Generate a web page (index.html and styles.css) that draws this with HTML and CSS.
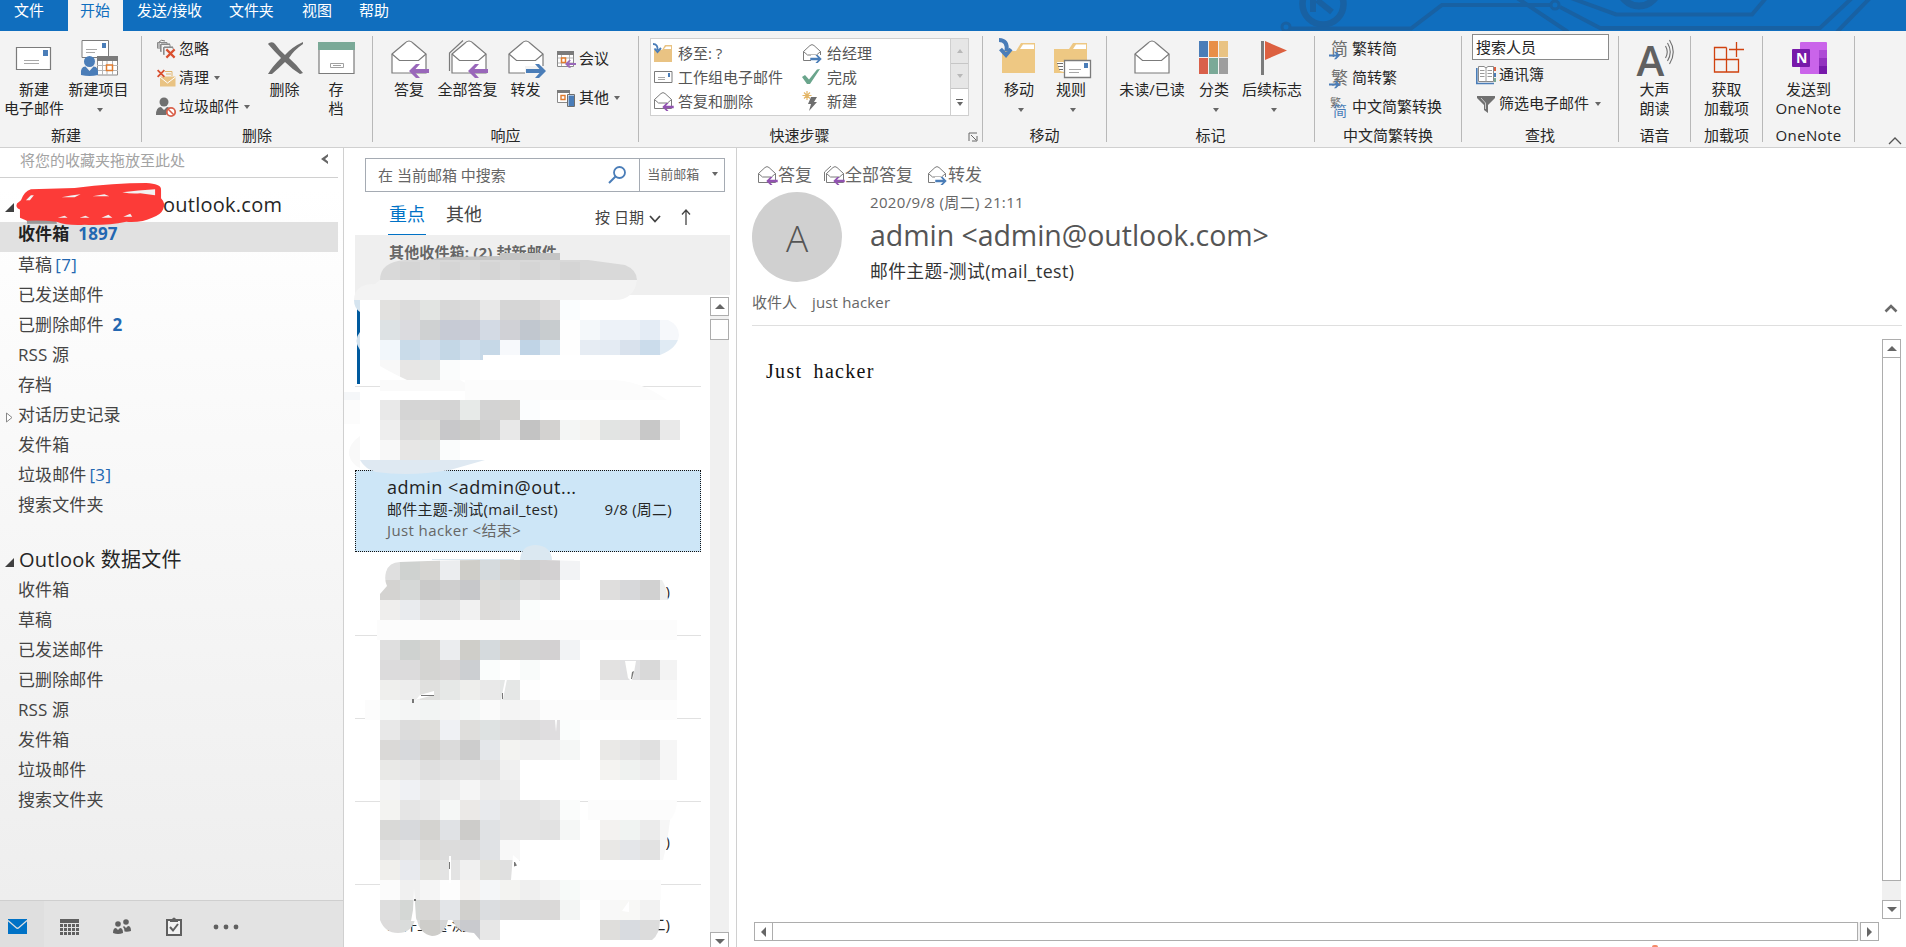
FILE: index.html
```html
<!DOCTYPE html>
<html lang="zh-CN">
<head>
<meta charset="utf-8">
<title>Outlook</title>
<link rel="stylesheet" href="styles.css">
</head>
<body>
<svg class="defs" width="0" height="0" aria-hidden="true">
  <symbol id="env" viewBox="0 0 44 44"><path d="M5 18 17.500 7.500Q22 2.500 26.500 7.500L39 18V37H5Z" fill="#fff" stroke="#7b7b7b" stroke-width="1.200"/><path d="M5 18 12.500 24.500H31.500L39 18" fill="none" stroke="#7b7b7b" stroke-width="1.200"/></symbol>
  <symbol id="arrL" viewBox="0 0 20 14"><path d="M0 7 7 0H11L6.500 5H20V9H6.500L11 14H7Z"/></symbol>
  <symbol id="arrR" viewBox="0 0 20 14"><path d="M20 7 13 0H9L13.500 5H0V9H13.500L9 14H13Z"/></symbol>
  <symbol id="senv" viewBox="0 0 20 20"><path d="M1.500 8.500 8 2.500Q10 .7 12 2.500L18.500 8.500V17.500H1.500Z" fill="#fff" stroke="#7b7b7b"/><path d="M1.500 8.500 5.500 12H14.500L18.500 8.500" fill="none" stroke="#7b7b7b"/></symbol>
  <symbol id="redx" viewBox="0 0 12 12"><path d="M1.500 1.500 10.500 10.500M10.500 1.500 1.500 10.500" stroke="#d9502f" stroke-width="2.400"/></symbol>
</svg>

<header class="tabs">
  <svg class="circuit" viewBox="0 0 640 31" width="640" height="31" fill="none" stroke="#1861a3" stroke-width="4">
    <circle cx="57" cy="4" r="20.500" stroke-width="6.500"/><path d="M47-4V12M51 0 66 12" stroke-width="6"/>
    <circle cx="20" cy="27" r="4" stroke-width="3"/><path d="M24 28.500H145L176 5H284M251-2 302 32" />
    <circle cx="289" cy="5" r="4" stroke-width="3"/><path d="M294 7 334 28H554L586-2M305-2 350 14.500H486L500-2M571 32 604-2"/>
    <circle cx="373" cy="-14" r="20" stroke-width="7"/>
  </svg>
  <span class="tab t-file">文件</span><span class="tab on">开始</span><span class="tab t-send">发送/接收</span><span class="tab t-fold">文件夹</span><span class="tab t-view">视图</span><span class="tab t-help">帮助</span>
</header>

<section class="ribbon">
  <div class="group g-new">
    <div class="body">
      <div class="big w68"><svg class="ico" viewBox="0 0 44 44"><path d="M4.500 11.500H38.500V33.500H4.500Z" fill="#fff" stroke="#7b7b7b" stroke-width="1.200"/><path d="M31 14h5v6h-5Z" fill="#4a7db8"/><path d="M12 24.500H27M12 27.500H27" stroke="#a8a8a8"/></svg><b>新建</b><b>电子邮件</b></div>
      <div class="big w61"><svg class="ico" viewBox="0 0 44 44"><path d="M5 4.500H31.500V21.500H5Z" fill="#fff" stroke="#7b7b7b"/><path d="M25 7h4v5h-4Z" fill="#4a7db8"/><path d="M9 13.500H20M9 16.500H18" stroke="#a8a8a8"/><path d="M20.500 20.500H40.500V39H20.500Z" fill="#fff" stroke="#8a8a8a"/><path d="M20 20H41V25H20Z" fill="#7b7b7b"/><path d="M25.500 25V39M30 25V39M35.500 25V39M20 29.500H41M20 34.500H41" stroke="#b5b5b5"/><path d="M29.500 29h6v5.500h-6Z" fill="#fff" stroke="#e07b2e" stroke-width="1.500"/><circle cx="12.500" cy="25.500" r="5.500" fill="#4a7db8"/><path d="M4 39Q3 30.500 8.500 30.500L12.500 35 16.500 30.500Q22 30.500 21 39Q12.500 41 4 39Z" fill="#4a7db8"/></svg><b>新建项目</b><i class="caret"></i></div>
    </div>
    <div class="label shift-new">新建</div>
  </div>

  <div class="group g-del">
    <div class="body">
      <div class="smalls c-del">
        <div class="small"><svg viewBox="0 0 20 20"><path d="M3 10V3Q5 0 9 2M5 13V5H14M8 16V8H17" fill="none" stroke="#7b7b7b"/><path d="M1.500 9.500V3.500H11V6M4.500 12.500V5.500H14V8M7.500 15.500V8.500H17V10" fill="none" stroke="#8a8a8a"/><use href="#redx" x="9" y="9" width="11" height="11"/></svg><span>忽略</span></div>
        <div class="small"><svg viewBox="0 0 20 20"><path d="M4 8.500H19.500V18.500H4Z" fill="#e9c383"/><path d="M4 9 11.500 15 19.500 9" fill="none" stroke="#fff"/><path d="M9 3.500H16V8M10 6H15" fill="none" stroke="#e0b56c"/><use href="#redx" x="0" y="1" width="10" height="9"/></svg><span>清理</span><i class="caret"></i></div>
        <div class="small"><svg viewBox="0 0 20 20"><circle cx="8" cy="5" r="4.500" fill="#707070"/><path d="M0 18Q0 10 5 10L8 13 11 10Q13 10 14 12L10 18Z" fill="#707070"/><circle cx="15" cy="15" r="4.200" fill="#fff" stroke="#d9604a" stroke-width="1.800"/><path d="M12 12 18 18" stroke="#d9604a" stroke-width="1.600"/></svg><span>垃圾邮件</span><i class="caret"></i></div>
      </div>
      <div class="big w59"><svg class="ico" viewBox="0 0 44 44"><path d="M6 7Q10 5 12 8Q17 15 22 19Q29 11 40 6L40 8Q31 14 26 22Q34 29 40 37L37 38Q29 33 22 26Q16 32 9 38H5Q9 31 18 22Q11 15 5 8Z" fill="#6e6e6e"/></svg><b>删除</b></div>
      <div class="big w44"><svg class="ico" viewBox="0 0 44 44"><path d="M5 10.500H40V37.500H5Z" fill="#fff" stroke="#7b7b7b" stroke-width="1.200"/><path d="M4 6H41V14H4Z" fill="#7aa997"/><path d="M16.500 27.500H29.500V31.500H16.500ZM19 29.500H27" fill="none" stroke="#a0a0a0"/></svg><b>存</b><b>档</b></div>
    </div>
    <div class="label">删除</div>
  </div>

  <div class="group g-resp">
    <div class="body">
      <div class="big w58"><svg class="ico" viewBox="0 0 44 44"><use href="#env" width="44" height="44"/><use href="#arrL" x="22" y="28" width="20" height="14" fill="#9967ba"/></svg><b>答复</b></div>
      <div class="big w59"><svg class="ico" viewBox="0 0 44 44"><path d="M3.500 35V17L17 4.500" fill="none" stroke="#7b7b7b" stroke-width="1.200"/><use href="#env" x="1" width="44" height="44"/><use href="#arrL" x="22" y="28" width="20" height="14" fill="#9967ba"/></svg><b>全部答复</b></div>
      <div class="big w57"><svg class="ico" viewBox="0 0 44 44"><use href="#env" width="44" height="44"/><path d="M21 30H40V40H21Z" fill="#f3f3f3"/><use href="#arrR" x="22" y="28" width="20" height="14" fill="#4a7db8"/></svg><b>转发</b></div>
      <div class="smalls c-meet">
        <div class="small"><svg viewBox="0 0 20 20"><path d="M1.500 2.500H17.500V17.500H1.500Z" fill="#fff" stroke="#8a8a8a"/><path d="M1 2H18V6H1Z" fill="#7b7b7b"/><path d="M5.500 6V17M13.500 6V17M2 9H17M2 14H17" stroke="#b5b5b5"/><path d="M5.500 9h4v4.500h-4Z" fill="#fff" stroke="#e07b2e" stroke-width="1.500"/><use href="#arrL" x="9" y="11" width="11" height="8" fill="#9967ba"/></svg><span>会议</span></div>
        <div class="small"><svg viewBox="0 0 20 20"><path d="M1.500 2.500H13.500V14.500H1.500Z" fill="#fff" stroke="#8a8a8a"/><path d="M1 2H14V5H1Z" fill="#7b7b7b"/><path d="M5 7.500h4v4h-4Z" fill="#fff" stroke="#e07b2e" stroke-width="1.400"/><path d="M12 7H18.500V19H12Z" fill="#4a7db8" stroke="#fff"/><path d="M11.500 6.500H18.500V18.500H11.500Z" fill="none" stroke="#6e6e6e"/></svg><span>其他</span><i class="caret"></i></div>
      </div>
    </div>
    <div class="label">响应</div>
  </div>

  <div class="group g-quick">
    <div class="body">
      <div class="gallery">
        <div class="q"><svg viewBox="0 0 20 20"><path d="M1 7H9L12 2H19V19H1Z" fill="#e9c383"/><path d="M11 6 13 3.500H18V6Z" fill="#fff"/><path d="M0 1Q5 1 4.500 7M1.500 5.500 4.500 9 8 5" fill="none" stroke="#4a7db8" stroke-width="1.900"/></svg><span>移至: ?</span></div>
        <div class="q"><svg viewBox="0 0 20 20"><use href="#senv" width="20" height="20"/><path d="M9 12H19V19H9Z" fill="#fff"/><use href="#arrR" x="8" y="12" width="12" height="8" fill="#4a7db8"/></svg><span>给经理</span></div>
        <div class="q"><svg viewBox="0 0 20 20"><path d="M1.500 4.500H19V15.500H1.500Z" fill="#fff" stroke="#7b7b7b"/><path d="M15 6h2v4h-2Z" fill="#4a7db8"/><path d="M5 10.500H12M5 12.500H12" stroke="#a8a8a8"/></svg><span>工作组电子邮件</span></div>
        <div class="q"><svg viewBox="0 0 20 20"><path d="M0 10 3 8 7 12.500 15 2.500 18 2 8 17H5Z" fill="#6aa58c"/></svg><span>完成</span></div>
        <div class="q"><svg viewBox="0 0 20 20"><use href="#senv" width="20" height="20"/><use href="#arrL" x="9" y="12" width="12" height="8" fill="#9152b0"/></svg><span>答复和删除</span></div>
        <div class="q"><svg viewBox="0 0 20 20"><path d="M5 0V9M.5 4.500H9.500M2 1.500 8 7.500M8 1.500 2 7.500" stroke="#e3b566" stroke-width="1.200"/><path d="M9 6H15L12 11H15L7 20 9 13H6Z" fill="#6e6e6e"/></svg><span>新建</span></div>
      </div>
      <div class="spin"><i class="up off"></i><i class="dn off"></i><i class="more"></i></div>
    </div>
    <div class="label shift-quick"><span>快速步骤</span><svg class="launch" viewBox="0 0 10 10"><path d="M1 9V1H9M3 3 8 8M9 4V9H4" fill="none" stroke="#666"/></svg></div>
  </div>

  <div class="group g-move">
    <div class="body">
      <div class="big w52"><svg class="ico" viewBox="0 0 44 44"><path d="M5 15H19L24 7H38V37H5Z" fill="#eec883"/><path d="M23 13 26 8.500H37V13Z" fill="#fff"/><path d="M2 4Q11 4 9.500 15M3.500 13 9 19 14 13" fill="none" stroke="#4a7db8" stroke-width="4"/></svg><b>移动</b><i class="caret"></i></div>
      <div class="big w52"><svg class="ico" viewBox="0 0 44 44"><path d="M5 13H20L24 7H38V37H5Z" fill="#eec883"/><path d="M24 13 27 8.500H37V13Z" fill="#fff"/><path d="M8 26H15V36L11 35Z" fill="#fff"/><path d="M8 27.500H14M9 30.500H14M10 33.500H14" stroke="#6e6e6e"/><path d="M15.500 24.500H41.500V41.500H15.500Z" fill="#fff" stroke="#7b7b7b" stroke-width="1.300"/><path d="M35 27h4v5h-4Z" fill="#4a7db8"/><path d="M20 33.500H32M20 36.500H30" stroke="#a8a8a8"/></svg><b>规则</b><i class="caret"></i></div>
    </div>
    <div class="label">移动</div>
  </div>

  <div class="group g-tag">
    <div class="body">
      <div class="big w72"><svg class="ico" viewBox="0 0 44 44"><use href="#env" width="44" height="44"/></svg><b>未读/已读</b></div>
      <div class="big w52"><svg class="ico" viewBox="0 0 44 44"><path d="M7 5h9v16H7Z" fill="#4a7db8"/><path d="M17 5h9v16H17Z" fill="#e88f48"/><path d="M27 5h9v16H27Z" fill="#e9c383"/><path d="M7 22h9v16H7Z" fill="#d9604a"/><path d="M17 22h9v16H17Z" fill="#7aa997"/><path d="M27 22h9v16H27Z" fill="#9e9e9e"/></svg><b>分类</b><i class="caret"></i></div>
      <div class="big w64"><svg class="ico" viewBox="0 0 44 44"><path d="M11 5h3v34h-3Z" fill="#7b7b7b"/><path d="M15 5 37 14.500 15 24Z" fill="#dc6040"/></svg><b>后续标志</b><i class="caret"></i></div>
    </div>
    <div class="label">标记</div>
  </div>

  <div class="group g-conv">
    <div class="body">
      <div class="smalls c-conv">
        <div class="small"><svg viewBox="0 0 20 20"><text x="2" y="16" class="han gray">简</text><use href="#arrR" x="0" y="12" width="11" height="9" fill="#4a7db8"/></svg><span>繁转简</span></div>
        <div class="small"><svg viewBox="0 0 20 20"><text x="2" y="16" class="han gray">繁</text><use href="#arrR" x="0" y="12" width="11" height="9" fill="#4a7db8"/></svg><span>简转繁</span></div>
        <div class="small"><svg viewBox="0 0 20 20"><text x="1" y="10" class="han-s gray">繁</text><text x="4" y="19" class="han-m blue">简</text></svg><span>中文简繁转换</span></div>
      </div>
    </div>
    <div class="label">中文简繁转换</div>
  </div>

  <div class="group g-find">
    <div class="body col">
      <div class="people">搜索人员</div>
      <div class="small book"><svg viewBox="0 0 20 20"><path d="M.8 3V18.500H18" fill="none" stroke="#4a7db8" stroke-width="1.600"/><path d="M2.500 1.500H8L10 3 12 1.500H17.500V16.500H2.500Z" fill="#fff" stroke="#8a8a8a"/><path d="M10 3V16.500M4 5.500H8.500M4 8.500H8.500M4 11.500H8.500M11.500 5.500H16M11.500 8.500H16M11.500 11.500H16" stroke="#9a9a9a"/><path d="M18 2h2v4h-2Z" fill="#dc6040"/><path d="M18 8h2v4h-2Z" fill="#4a7db8"/><path d="M18 13h2v4h-2Z" fill="#7aa997"/></svg><span>通讯簿</span></div>
      <div class="small filt"><svg viewBox="0 0 20 20"><path d="M1 2H19V4L12 11V19L8 16V11L1 4Z" fill="#707070"/><path d="M5 4 9.500 9V15" fill="none" stroke="#c9c9c9"/></svg><span>筛选电子邮件</span><i class="caret"></i></div>
    </div>
    <div class="label">查找</div>
  </div>

  <div class="group g-72a">
    <div class="body"><div class="big w71"><svg class="ico" viewBox="0 0 44 44"><text x="3.500" y="39.500" class="aloud">A</text><path d="M32.500 10Q36 16 32.500 22M34.500 7Q40 16 34.500 25M36.500 4Q44 16 36.500 28" fill="none" stroke="#6e6e6e" stroke-width="1.100"/></svg><b>大声</b><b>朗读</b></div></div>
    <div class="label">语音</div>
  </div>

  <div class="group g-72b">
    <div class="body"><div class="big w71"><svg class="ico" viewBox="0 0 44 44"><path d="M21.500 11.500H9.500V36H33.500V23.500H9.500M21.500 11.500V36M31.500 6V21M24 13.500H39" fill="none" stroke="#d0420f" stroke-width="1.300"/></svg><b>获取</b><b>加载项</b></div></div>
    <div class="label">加载项</div>
  </div>

  <div class="group g-one">
    <div class="body"><div class="big w91"><svg class="ico" viewBox="0 0 44 44"><rect x="13" y="6" width="27" height="32" rx="1" fill="#ca64ea"/><path d="M32 14h8v8h-8Z" fill="#ae4bd5"/><path d="M32 22h8v8h-8Z" fill="#9332bf"/><path d="M32 30h8v8h-8Z" fill="#7719aa"/><rect x="5" y="13" width="18" height="18" rx="1" fill="#7719aa"/><text x="9" y="27" class="note">N</text></svg><b>发送到</b><b class="lat">OneNote</b></div></div>
    <div class="label lat">OneNote</div>
  </div>
  <svg class="collapse" viewBox="0 0 14 8"><path d="M1 7 7 1 13 7" fill="none" stroke="#555" stroke-width="1.300"/></svg>
</section>

<main class="panes">
  <aside class="nav">
    <div class="fav"><span>将您的收藏夹拖放至此处</span><svg viewBox="0 0 8 10"><path d="M7 0V2.500L4 5 7 7.500V10L0 5Z" fill="#666"/></svg></div>
    <div class="acct"><svg class="tri" viewBox="0 0 9 9"><path d="M9 0V9H0Z" fill="#404040"/></svg><span class="addr">outlook.com</span>
      <svg class="scrib" viewBox="0 0 154 48" preserveAspectRatio="none"><path d="M12 34H42V40H12Z" fill="#999"/><path d="M6 17Q9 8 16 6L60 5Q100 0 132 0Q147 1 147 6V15Q152 20 149 26Q147 31 138 34Q128 39 112 38Q92 42 70 41Q52 42 42 38Q26 36 12 37L5 34V26Q0 24 2 20Z" fill="#fc3b38"/><path d="M11 17 16 12H19L15 17ZM47 14Q56 12 66 11L60 14ZM78 13 90 11 95 13ZM108 9Q124 7 141 6V12L126 10Q118 11 108 9ZM43 34 50 32 53 34ZM65 34 71 32 75 34ZM87 34 94 31 98 34ZM109 33 116 30 118 33Z" fill="#f2f2f2"/></svg>
    </div>
    <div class="f sel"><strong>收件箱</strong><em>1897</em></div>
    <div class="f"><span>草稿</span><u>[7]</u></div>
    <div class="f"><span>已发送邮件</span></div>
    <div class="f"><span>已删除邮件</span><em>2</em></div>
    <div class="f"><span>RSS 源</span></div>
    <div class="f"><span>存档</span></div>
    <div class="f"><svg class="exp" viewBox="0 0 7 11"><path d="M.5 1V10L6 5.500Z" fill="#fff" stroke="#888"/></svg><span>对话历史记录</span></div>
    <div class="f"><span>发件箱</span></div>
    <div class="f"><span>垃圾邮件</span><u>[3]</u></div>
    <div class="f"><span>搜索文件夹</span></div>
    <div class="acct second"><svg class="tri" viewBox="0 0 9 9"><path d="M9 0V9H0Z" fill="#404040"/></svg><span>Outlook 数据文件</span></div>
    <div class="f"><span>收件箱</span></div>
    <div class="f"><span>草稿</span></div>
    <div class="f"><span>已发送邮件</span></div>
    <div class="f"><span>已删除邮件</span></div>
    <div class="f"><span>RSS 源</span></div>
    <div class="f"><span>发件箱</span></div>
    <div class="f"><span>垃圾邮件</span></div>
    <div class="f"><span>搜索文件夹</span></div>
    <div class="modules">
      <span class="mod active"><svg width="19" height="15" viewBox="0 0 19 15"><path d="M0 0H19V15H0Z" fill="#0072c6"/><path d="M0 1.500 8 8.500Q9.500 10 11 8.500L19 1.500" fill="none" stroke="#e0e0e0" stroke-width="1.200"/></svg></span>
      <svg class="m2" width="19" height="16" viewBox="0 0 19 16"><path d="M0 0h19v4H0Z" fill="#606060"/><path d="M0 6.500H19M0 10.500H19M0 14.500H19" stroke="#606060" stroke-width="3" stroke-dasharray="3 1"/></svg>
      <svg class="m3" width="18" height="16" viewBox="0 0 18 16" fill="#606060"><circle cx="5" cy="5" r="2.800"/><circle cx="13" cy="3" r="2.800"/><path d="M0 14Q0 9 3 9L5 11 7 9Q10 9 10 14Q5 16 0 14ZM10 8 11 7 13 9 15 7Q18 7 18 12Q15 13 11.500 12.500Q11.500 9 10 8Z"/></svg>
      <svg class="m4" width="16" height="19" viewBox="0 0 16 19"><path d="M1 3H15V18H1Z" fill="#f2f2f2" stroke="#606060" stroke-width="2"/><path d="M4 2H6Q8-1 10 2H12V5H4Z" fill="#606060"/><path d="M4 10 7 13.500 12 7" fill="none" stroke="#606060" stroke-width="2"/></svg>
      <svg class="m5" width="26" height="6" viewBox="0 0 26 6" fill="#606060"><circle cx="3" cy="3" r="2.400"/><circle cx="13" cy="3" r="2.400"/><circle cx="23" cy="3" r="2.400"/></svg>
    </div>
  </aside>

  <section class="list">
    <div class="search"><span class="ph">在 当前邮箱 中搜索</span><svg class="loupe" viewBox="0 0 18 18"><circle cx="11.500" cy="6.500" r="5.500" fill="none" stroke="#4a7db8" stroke-width="1.800"/><path d="M7.500 10.500 1 17" stroke="#4a7db8" stroke-width="2"/></svg><span class="scope">当前邮箱<i class="caret"></i></span></div>
    <div class="filter"><span class="focus">重点</span><span class="other">其他</span><span class="sort">按 日期</span><svg class="chev" viewBox="0 0 12 8"><path d="M1 1 6 6.500 11 1" fill="none" stroke="#444" stroke-width="1.800"/></svg><svg class="uparr" viewBox="0 0 10 16"><path d="M5 16V1M1 5.500 5 1 9 5.500" fill="none" stroke="#444" stroke-width="1.300"/></svg></div>
    <div class="newmail">其他收件箱: (2) 封新邮件</div>
    <div class="scrollarea">
      <div class="mails">
        <div class="mail m-a"><i class="unread"></i></div>
        <div class="mail m-b"></div>
        <div class="mail chosen">
          <div class="from">admin &lt;admin@out...</div>
          <div class="subj"><span>邮件主题-测试(mail_test)</span><span class="when">9/8 (周二)</span></div>
          <div class="prev">Just hacker &lt;结束&gt;</div>
        </div>
        <div class="mail m-d"><div class="under"><span class="when">二)</span></div></div>
        <div class="mail"></div>
        <div class="mail"></div>
        <div class="mail"><div class="under"><span class="when">二)</span></div></div>
        <div class="mail last"><div class="under"><span>邮件主题-测试</span><span class="when">二)</span></div></div>
      </div>
      <div class="vbar"><i class="btn upb"></i><i class="thumb"></i><i class="track"></i><i class="btn dnb"></i></div>
    </div>
    <svg class="mosaic" id="mosaic" viewBox="344 148 392 799" width="392" height="799"></svg>
  </section>

  <section class="reader">
    <div class="acts">
      <span class="act a1"><svg viewBox="0 0 20 20"><use href="#senv" width="20" height="20"/><use href="#arrL" x="9" y="12" width="12" height="8" fill="#9152b0"/></svg>答复</span>
      <span class="act a2"><svg viewBox="0 0 20 20"><path d="M.5 16V7L7 1" fill="none" stroke="#7b7b7b"/><use href="#senv" x="1" width="20" height="20"/><use href="#arrL" x="9" y="12" width="12" height="8" fill="#9152b0"/></svg>全部答复</span>
      <span class="act"><svg viewBox="0 0 20 20"><use href="#senv" width="20" height="20"/><path d="M8 12H20V20H8Z" fill="#fff"/><use href="#arrR" x="8" y="12" width="12" height="8" fill="#4a7db8"/></svg>转发</span>
    </div>
    <div class="head">
      <div class="avatar">A</div>
      <div class="meta">
        <div class="date">2020/9/8 (周二) 21:11</div>
        <div class="sender">admin &lt;admin@outlook.com&gt;</div>
        <div class="title">邮件主题-测试(mail_test)</div>
      </div>
    </div>
    <div class="to"><span>收件人</span><span class="who">just hacker</span><svg viewBox="0 0 14 9"><path d="M1.500 7.500 7 2 12.500 7.500" fill="none" stroke="#6a6a6a" stroke-width="2.600"/></svg></div>
    <div class="content">
      <div class="text">Just hacker</div>
      <div class="vbar vr"><i class="btn upb"></i><i class="thumb"></i><i class="track"></i><i class="btn dnb"></i></div>
    </div>
    <div class="hbar"><i class="btn lfb"></i><i class="thumb"></i><i class="track"></i><i class="btn rtb"></i></div>
    <i class="dot"></i>
  </section>
</main>
<script src="script.js"></script>
</body>
</html>
```

FILE: styles.css
```css
* { box-sizing: border-box; }
html, body { margin: 0; height: 947px; overflow: hidden; background: #fff; }
body { font-family: "Open Sans", "Noto Sans CJK SC", sans-serif; font-size: 15px; color: #262626; display: flex; flex-direction: column; }
i, em { font-style: normal; }
b { font-weight: 400; }
u { text-decoration: none; }
svg { display: block; flex: none; overflow: visible; }
.defs { position: absolute; }

/* tab strip */
.tabs { height: 31px; flex: none; background: #106ebe; color: #fff; display: flex; position: relative; overflow: hidden; }
.tab { height: 31px; line-height: 20px; white-space: nowrap; letter-spacing: -.1px; }
.circuit { position: absolute; left: 1266px; top: 0; }
.t-file { width: 68px; padding-left: 14px; }
.tab.on { width: 55px; padding-left: 12px; background: #f3f3f3; color: #106ebe; }
.t-send { width: 106px; padding-left: 14px; }
.t-fold { width: 73px; }
.t-view { width: 57px; }

/* ribbon */
.ribbon { height: 117px; flex: none; background: #f3f3f3; border-bottom: 1px solid #d0d0d0; display: flex; padding-top: 5px; }
.group { height: 106px; border-right: 1px solid #b8b8b8; display: flex; flex-direction: column; flex: none; }
.body { height: 92px; display: flex; }
.label { height: 14px; line-height: 14px; text-align: center; white-space: nowrap; position: relative; }
.g-new { width: 142px; } .g-del { width: 231px; } .g-resp { width: 266px; } .g-quick { width: 344px; }
.g-move { width: 124px; } .g-tag { width: 208px; } .g-conv { width: 147px; } .g-find { width: 157px; }
.g-72a, .g-72b { width: 72px; } .g-one { width: 92px; }
.shift-new { padding-right: 9px; }
.shift-quick { padding-right: 22px; }
.launch { position: absolute; right: 4px; top: 4px; width: 10px; height: 10px; }
.g-resp .body { padding-left: 7px; }
.g-move .body { padding-left: 10px; }
.g-tag .body { padding-left: 9px; }
.g-quick .body { padding: 2px 0 0 11px; }
.big { display: flex; flex-direction: column; align-items: center; flex: none; }
.big .ico { width: 44px; height: 44px; }
.big b { line-height: 18px; height: 19px; white-space: nowrap; }
.big .caret { margin: 9px 0 0 3px; }
.caret { display: block; width: 0; height: 0; border: 3px solid transparent; border-top: 4px solid #666; border-bottom: 0; flex: none; }
.w44 { width: 44px; } .w52 { width: 52px; } .w57 { width: 57px; } .w58 { width: 58px; } .w59 { width: 59px; } .w61 { width: 61px; }
.w64 { width: 64px; } .w68 { width: 68px; } .w71 { width: 71px; } .w72 { width: 72px; } .w91 { width: 91px; }
.lat { letter-spacing: .35px; }
.smalls { display: flex; flex-direction: column; flex: none; margin-top: -2px; }
.small { display: flex; align-items: center; height: 29px; line-height: 20px; white-space: nowrap; }
.small span { padding-bottom: 2px; }
.small svg { width: 20px; height: 20px; margin-right: 4px; }
.small .caret { margin-left: 5px; }
.c-del { width: 113px; padding-left: 14px; }
.c-del .small svg { margin-right: 3px; }
.c-meet { padding: 10px 0 0 2px; gap: 10px; }
.c-meet .small svg { margin-right: 3px; }
.c-conv { padding-left: 14px; }
.c-conv .small svg { margin-right: 3px; }
.han { font-size: 17px; } .han-m { font-size: 14px; } .han-s { font-size: 11px; }
.gray { fill: #6e6e6e; } .blue { fill: #4a7db8; }
.gallery { width: 301px; height: 78px; border: 1px solid #cfcfcf; background: #fff; display: grid; grid-template-columns: 149px 149px; grid-auto-rows: 24px; padding: 2px; color: #555; }
.q { display: flex; align-items: center; white-space: nowrap; }
.q span { padding-bottom: 2px; }
.q svg { width: 20px; height: 20px; margin-right: 5px; }
.spin { width: 18px; display: flex; flex-direction: column; height: 78px; border: 1px solid #cfcfcf; border-left: 0; }
.spin i { display: flex; align-items: center; justify-content: center; height: 25px; background: #e6e6e6; border-bottom: 1px solid #c6c6c6; }
.spin i::before { content: ""; border: 3px solid transparent; }
.spin .up::before { border-bottom: 4px solid #b8b8b8; border-top: 0; }
.spin .dn::before { border-top: 4px solid #b8b8b8; border-bottom: 0; }
.spin .more { background: #fff; height: 26px; border: 0; flex-direction: column; gap: 2px; }
.spin .more::after { content: ""; order: -1; width: 7px; height: 1px; background: #666; }
.spin .more::before { border-top: 4px solid #666; border-bottom: 0; }
.col { flex-direction: column; padding-left: 10px; }
.people { width: 137px; height: 26px; border: 1px solid #8a8a8a; background: #fff; line-height: 25px; padding-left: 3px; margin-top: -2px; flex: none; }
.book { padding-left: 4px; }
.filt { padding-left: 4px; }
.book span, .filt span { margin-left: -1px; }
.filt .caret { margin-left: 6px; }
.aloud { font: 600 42px "Open Sans", sans-serif; fill: #606060; }
.note { font: 700 14px "Open Sans", sans-serif; fill: #fff; }
.collapse { width: 14px; height: 8px; margin: 101px 0 0 33px; }

/* panes */
.panes { flex: 1; display: flex; min-height: 0; }
.nav { width: 344px; flex: none; border-right: 1px solid #d0d0d0; background: linear-gradient(#fff 0, #fff 40px, #eee 750px); display: flex; flex-direction: column; height: 799px; }
.fav { width: 338px; height: 30px; border-bottom: 1px solid #d0d0d0; display: flex; justify-content: space-between; padding: 0 9px 0 20px; line-height: 25px; color: #a3a3a3; flex: none; }
.fav svg { width: 8px; height: 10px; margin-top: 6px; }
.acct { height: 44px; display: flex; align-items: center; font-size: 20px; flex: none; position: relative; padding: 10px 0 0 5px; line-height: 30px; letter-spacing: .25px; }
.tri { width: 9px; height: 9px; margin: 5px 5px 0 0; }
.addr { margin-left: 144px; }
.scrib { position: absolute; left: 15px; top: 5px; width: 153px; height: 49px; }
.second { height: 55px; padding-top: 23px; }
.f { height: 30px; line-height: 28px; font-size: 17px; padding-left: 18px; display: flex; color: #444; flex: none; white-space: nowrap; letter-spacing: .1px; }
.f.sel { width: 338px; background: #e1e1e1; line-height: 23px; color: #222; }
.f.sel + .f { margin-top: -1px; }
.f em { color: #2367b1; font-weight: 700; margin-left: 9px; letter-spacing: .1px; }
.f u { color: #2367b1; margin-left: 3px; letter-spacing: .4px; }
.exp { width: 7px; height: 11px; margin: 11px 5px 0 -12px; }
.modules { margin-top: auto; height: 47px; background: #e3e3e3; border-top: 1px solid #cfcfcf; display: flex; flex: none; }
.mod { width: 44px; height: 46px; background: #dfdfdf; padding: 18px 0 0 8px; }
.m2 { margin: 18px 0 0 16px; } .m3 { margin: 18px 0 0 34px; } .m4 { margin: 16px 0 0 35px; } .m5 { margin: 23px 0 0 31px; }

.list { width: 393px; flex: none; border-right: 1px solid #d0d0d0; position: relative; display: flex; flex-direction: column; padding: 10px 0 0 11px; }
.search { width: 360px; height: 34px; border: 1px solid #a5abb3; margin-left: 10px; display: flex; align-items: center; flex: none; color: #666; }
.ph { width: 230px; padding: 0 0 2px 12px; white-space: nowrap; }
.loupe { width: 18px; height: 18px; margin: 0 13px 0 13px; }
.scope { height: 32px; width: 85px; border-left: 1px solid #a5abb3; font-size: 13px; line-height: 30px; padding: 0 0 2px 7px; display: flex; align-items: center; gap: 13px; white-space: nowrap; }
.filter { height: 43px; display: flex; padding-left: 33px; color: #444; flex: none; line-height: 44px; font-size: 18px; white-space: nowrap; }
.focus { color: #0072c6; border-bottom: 1px solid #0072c6; width: 38px; padding-left: 1px; }
.other { width: 37px; margin-left: 20px; }
.sort { font-size: 15px; line-height: 50px; margin-left: 112px; width: 50px; }
.chev { width: 12px; height: 8px; margin: 23px 0 0 4px; }
.uparr { width: 10px; height: 16px; margin: 17px 0 0 20px; }
.newmail { width: 375px; height: 60px; background: #efefef; font-weight: 700; color: #666; padding-left: 34px; line-height: 35px; flex: none; letter-spacing: .15px; }
.scrollarea { display: flex; height: 652px; overflow: hidden; }
.mails { width: 346px; }
.mail { height: 83px; border-bottom: 1px solid #e1e1e1; }
.m-a { height: 92px; padding-left: 2px; }
.m-b { height: 83px; border: 0; }
.m-d { height: 84px; }
.unread { display: block; width: 3px; height: 89px; background: #005a9e; }
.mail.chosen { height: 82px; background: #cde6f7; border: 1px dotted #111; padding: 3px 0 0 31px; white-space: nowrap; }
.from { font-size: 18px; line-height: 26px; color: #222; letter-spacing: .5px; }
.subj { line-height: 19px; display: flex; justify-content: space-between; width: 285px; letter-spacing: .25px; }
.prev { line-height: 23px; color: #666; letter-spacing: .4px; }
.under { display: flex; padding: 29px 31px 0 32px; line-height: 20px; white-space: nowrap; }
.under .when { margin-left: auto; }
.vbar { width: 19px; margin: 2px 0 0 9px; background: #f0f0f0; display: flex; flex-direction: column; flex: none; }
.btn { display: flex; align-items: center; justify-content: center; width: 19px; height: 19px; border: 1px solid #adadad; background: #fff; flex: none; }
.btn::before { content: ""; border: 5px solid transparent; }
.upb::before { border-bottom-color: #666; border-top: 0; }
.dnb::before { border-top-color: #666; border-bottom: 0; }
.lfb::before { border-right-color: #666; border-left: 0; }
.rtb::before { border-left-color: #666; border-right: 0; }
.thumb { border: 1px solid #adadad; background: #fff; flex: none; }
.list .thumb { height: 21px; margin-top: 3px; }
.list .track { height: 592px; flex: none; }
.mosaic { position: absolute; left: 0; top: 0; }

.reader { flex: 1; display: flex; flex-direction: column; padding-left: 15px; min-width: 0; }
.acts { height: 44px; padding: 12px 0 0 5px; display: flex; color: #666; font-size: 17px; line-height: 29px; flex: none; white-space: nowrap; }
.act { display: flex; align-items: flex-start; }
.act svg { width: 20px; height: 20px; margin: 5px 1px 0 0; }
.a1 { width: 67px; } .a2 { width: 103px; }
.head { height: 92px; display: flex; flex: none; }
.avatar { width: 90px; height: 90px; border-radius: 50%; background: #d0d0d0; color: #555; font: 300 37px/91px "Open Sans", sans-serif; text-align: center; }
.meta { margin-left: 28px; white-space: nowrap; }
.date { line-height: 20px; color: #666; letter-spacing: .35px; }
.sender { font-size: 28.500px; line-height: 46px; color: #555; letter-spacing: -.05px; }
.title { font-size: 17.800px; line-height: 26px; color: #333; letter-spacing: .4px; }
.to { height: 42px; width: 1150px; border-bottom: 1px solid #dfdfdf; line-height: 37px; color: #666; display: flex; flex: none; }
.who { margin-left: 15px; letter-spacing: .15px; }
.to svg { width: 14px; height: 9px; margin: 20px 4px 0 auto; }
.content { height: 596px; display: flex; flex: none; }
.text { width: 1130px; padding: 32px 0 0 14px; font: 20px/26px "Liberation Serif", serif; letter-spacing: 1.3px; word-spacing: 5px; color: #111; }
.vr { width: 19px; margin: 13px 0 3px 0; }
.vr .thumb { height: 524px; margin-top: -1px; }
.vr .track { height: 19px; }
.hbar { height: 19px; margin-left: 2px; width: 1125px; display: flex; background: #f0f0f0; flex: none; }
.hbar .thumb { width: 1086px; margin-left: -1px; }
.hbar .track { width: 2px; }
.dot { width: 6px; height: 2px; border-radius: 3px 3px 0 0; background: #f58a68; margin: 4px 0 0 900px; }
```

FILE: script.js
```js
// Pixelated redaction blocks: 20px cells. Each row is [y, x, colours, clip].
const rows = [
  [300, 380, "e2e1df dcdcdc e2e4e2 d8d8d8 dadada e8e8e8 d6d6d6 d6d6d6 dddcdc fafdfe"],
  [320, 380, "dde2e4 dbdbdf cfd1d2 c7cbd5 c8cbd5 d3dae4 d0d1d6 c1c7cf c8cccf fefefe f4f8fa edf2f8 edf2f8 e4ecf5 f6f8fb", "r1"],
  [340, 380, "f2f7fb c9dbe9 d2dfec c4d7e6 cfdeec c6d8e7 f7f9fc c0d4e6 d7e4ef fefefe e6ecf3 e4ebf3 d9e2ed cbdceb e0ebf4", "r1"],
  [360, 380, "f8f8f8 e7e6e5 e5e7e6 fafcfc fefefe", "r2"],
  [400, 380, "e9e9e9 d5d5d5 d5d5d5 d4d4d4 e7eae8 d3d3d3 d4d3d1 fbfdfe"],
  [420, 380, "eeeeee dbdbdb ddddda c8c8ca cacac8 d0d0d0 e8e8e8 c3c3c3 d3d2d0 f4f6f5 f4f3f1 e2e4e3 e2e2e2 c8c8c8 e9e9e9"],
  [440, 380, "f8f8f8 e7e6e5 e4e6e5 fafcfc"],
  [560, 380, "dfdfdf cfd2d0 d6d5d2 ebedef cfcec9 d5dadd d4d3d0 cfcfcf d3d1d2 f2f3f5", "r3"],
  [580, 380, "d4d3d1 d6d8d7 cacac9 cfcfcf c7c8ca dcdcda d8dada e3e3e3 dfdfdf", "r3"],
  [580, 600, "dfdedd d7d8da d1d1d1 eeefee", "r4"],
  [600, 380, "efeeed e9ebee e1e1e1 e2e2e2 f1f1f1 dddcda dfdfdf fafdfc"],
  [640, 380, "dfdfdf cfd2d0 d6d5d2 ebedef cfcec9 d5dadd d4d3d0 d3d3d3 d3d1d2 f2f3f5"],
  [660, 380, "dcdbdc dcdbdc d4d4d2 d7d5d5 cccfd2 fafdfc ffffff f9fbfa"],
  [660, 600, "e3e2e1 e0e0e2 d9d9d9 f3f3f3"],
  [680, 380, "efefed ededed e0e0de e6e8e7 eeeeec e9e9e9 e5e7e6 fefefe"],
  [680, 600, "f8f8f8 f8f8f8 f8f8f8 f8f8f8"],
  [700, 380, "f6f8f7 f4f5f5 f2f4f3 f4f4f4 f4f7f6 fafafa f4f4f4 f5f5f5"],
  [720, 380, "e8e8e8 dcdcdc dfdedb eff1f4 dfdedc dee2e2 dddddd dbdbdb dfdddf fafdfc"],
  [740, 380, "dad9d7 d7d9dc d3d2cf dbdbdb cdcdcd e4e7ea f3f3f1 f0f0f0 f0f0f0 f5f7f6"],
  [740, 600, "eae9e7 e5e5e5 e0e0e0 f6f6f6"],
  [760, 380, "e9e9e7 e7e7e7 dfdfdf e3e3e3 e4e4e4 e2e2e2 f0f0f0"],
  [760, 600, "f4f3f1 eff2f0 ededed f6f6f6"],
  [780, 380, "f3f3f3 eff1f4 ebebeb ededed f5f5f5 ececec ededed"],
  [800, 380, "f3f3f1 e5e5e5 e8e8e8 f5f7f6 ebe9e7 e8eaed e5e5e5 e4e4e4 e8e8e8 fafcfb"],
  [820, 380, "d9d9d7 d7d9dc d4d3d0 e0e2e5 cdccca e0e2e4 e5e5e5 e4e4e4 e2e2e2 f5f7f6"],
  [820, 600, "f3f2f0 f0f3f2 ebebeb f6f6f6", "r5"],
  [840, 380, "e2e2e2 e5e5e5 dbdad8 dcdcdc dbdbdc e0e2e5 f8f8f8"],
  [840, 600, "e9e8e6 e4e6e9 e2e2e2 f8f8f8", "r5"],
  [860, 380, "f0efec e8eaee e3e3e0 e3e3e3 f0f0f0 e2e2df e0e0e0"],
  [880, 380, "fbfbfb f0f0f0 f5f5f5 fdfdfd f3f2f0 f4f6f8 f3f3f1 efefef f3f3f3 f7faf9"],
  [900, 380, "dedede d4d7d5 d7d6d4 e3e5e8 d1d0cd dbdde0 dbdbdb dadada dad9d8 f3f5f4"],
  [900, 600, "f8f8f8 f8f8f6 f2f2f2"],
  [920, 380, "dcdbdb dadcdb cecdca d5d5d5 c9cace e7e7e7", "r6"],
  [920, 600, "dfdedc d8dbe0 dcdcdc", "r7"]
];

const clips = {
  r1: "M380 320H668Q679 325 679 335Q678 348 660 355H483V360H380Z",
  r2: "M380 360H500V380H407Q390 372 380 366Z",
  r3: "M400 562Q500 558 580 561V580H560V600H380V594L387 586Q384 580 386 572Q389 562 400 562ZM560 561H580V580H560Z",
  r4: "M600 580H662Q667 588 668 600H600Z",
  r5: "M600 820H670Q667 845 663 860H600Z",
  r6: "M380 920H415Q411 933 398 933Q385 933 380 920ZM417 920H448Q444 936 432 936Q420 934 417 920ZM452 918Q455 932 474 933L480 940H500V920Z",
  r7: "M600 920H660Q660 934 652 940H600Z"
};

// Smooth brush strokes and thin veils that cover the list behind the cells.
const veils = [
  ["M380 280Q380 262 405 260H588L625 265Q637 270 637 280Z", "#d9d9d9"],
  ["M428 260 445 257 500 256V253H560V260Z", "#c4c4c4"],
  ["M354 300Q354 284 375 284L380 280H637Q634 300 615 300Z", "#f3f3f3"],
  ["M354 300H360V312Q354 308 354 300ZM360 332Q353 340 360 350Z", "#d5e4ef"],
  ["M445 384H639V388H445Z", "#ffffff"],
  ["M380 380H460L480 391H380Z", "#fafafa"],
  ["M465 380H610Q640 380 667 400H465Z", "#fcfcfc"],
  ["M344 392H360V424H344Z", "#fcfcfc"],
  ["M344 392H360V400H344Z", "#f5f7f9"],
  ["M360 436Q348 444 349 455Q352 465 360 468Z", "#f9f9f9"],
  ["M360 460H485L450 470Q410 477 376 472Q365 469 360 460Z", "#dfe9f2"],
  ["M520 560Q521 545 536 545Q551 546 552 560Z", "#dbe8f1"],
  ["M432 559H514V560H432Z", "#dbe8f1"],
  ["M377 620H677V640H377Z", "#fcfcfc"],
  ["M365 700H677V720H365Z", "#fcfcfc"],
  ["M588 800H677Q677 812 670 820H588Z", "#fcfcfc"],
  ["M380 880H661V900H380Z", "#fcfcfc"]
];

const NS = "http://www.w3.org/2000/svg";
const root = document.getElementById("mosaic");
const add = (parent, tag, attrs) => {
  const node = document.createElementNS(NS, tag);
  for (const key in attrs) node.setAttribute(key, attrs[key]);
  parent.appendChild(node);
  return node;
};

for (const id in clips) {
  add(add(root, "clipPath", { id }), "path", { d: clips[id] });
}
veils.forEach(([d, fill]) => add(root, "path", { d, fill }));
rows.forEach(([y, x, colours, clip]) => {
  const g = add(root, "g", clip ? { "clip-path": `url(#${clip})` } : {});
  const edge = y < 500 ? 680 : 677;
  colours.split(" ").forEach((c, i) =>
    add(g, "rect", { x: x + i * 20, y, width: Math.min(20, edge - x - i * 20), height: 20, fill: "#" + c, "shape-rendering": "crispEdges" }));
});
for (let i = 0; i < 5; i++) {
  add(root, "rect", { x: 400 + i * 40, y: 262, width: 20, height: 18, fill: "#d2d2d2", opacity: .5 });
}
// White nicks where the covering stroke skips the cells.
["M625 661 628 678 631 681 633 678 636 661Z", "M501 700 505 680 507 679 503 699Z", "M412 704 420 695 434 691V695L415 700Z", "M555 720 556 732 557 720Z", "M449 856H451V883H449Z", "M511 880 513 855 520 861V880Z", "M413 910 414 888 416 918 417 921H411Z", "M622 911 629 901V912Z"]
  .forEach(d => add(root, "path", { d, fill: "#fff" }));
["M412 699V703H414V699ZM421 695H434V696H421Z", "M631 679 632 672 634 671 632 679Z", "M502 693H503V699H502Z", "M449 862H450V869H449Z", "M514 862H515L517 865.500 514 866.500Z", "M414 899H416V901H414Z"]
  .forEach(d => add(root, "path", { d, fill: "#777" }));
```
